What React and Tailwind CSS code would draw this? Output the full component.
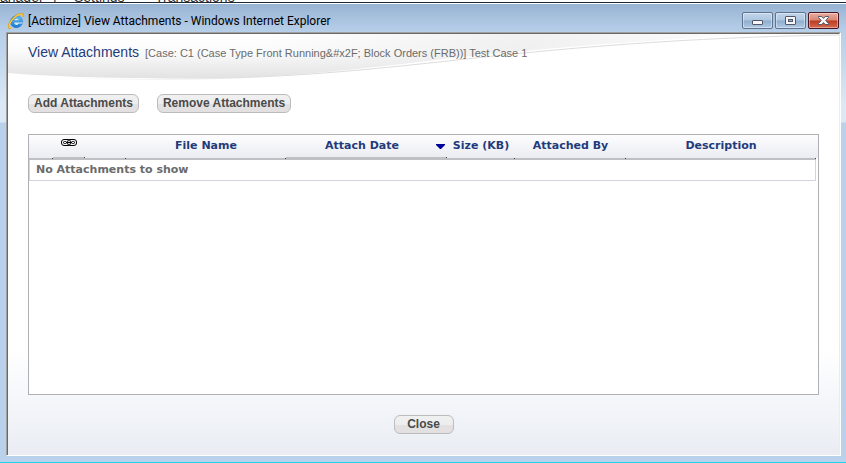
import React from "react";

const COLUMNS = [
  { key: "select", label: "", width: "w-[24px]" },
  { key: "link", label: "link", width: "w-[32px]", raised: true },
  { key: "type", label: "", width: "w-[41px]" },
  { key: "name", label: "File Name", width: "w-[160px]" },
  { key: "date", label: "Attach Date", width: "w-[161px]", raised: true },
  { key: "size", label: "Size (KB)", width: "w-[68px]" },
  { key: "by", label: "Attached By", width: "w-[111px]" },
  { key: "description", label: "Description", width: "" },
];

function BrowserIcon() {
  return (
    <svg className="size-4 shrink-0" viewBox="0 0 16 16" aria-hidden="true">
      <defs>
        <linearGradient id="ie" x1="0" y1="0" x2="0" y2="1">
          <stop offset="0" stopColor="#5cc3f7" />
          <stop offset="1" stopColor="#1a78d0" />
        </linearGradient>
      </defs>
      <path
        d="M14.300 10.600C13.400 13.200 11.200 14.700 8.500 14.700 5 14.700 2.400 12.100 2.400 8.700S5 2.800 8.500 2.800c3.900 0 6.200 2.700 6.100 6.800H6.200c.2 1.500 1.200 2.400 2.500 2.400.9 0 1.600-.5 2-1.400zM6.200 7.300h4.600c-.2-1.200-1.100-1.900-2.300-1.900S6.500 6.100 6.200 7.300z"
        fill="url(#ie)"
        stroke="#1468b4"
        strokeWidth=".4"
      />
      <path d="M6.200 7.300c.3-1.200 1.100-1.900 2.300-1.900s2.100.7 2.300 1.900zM6.200 9.600h8.200l-.2 1h-3.500c-.4.900-1.100 1.400-2 1.400-1.300 0-2.300-.9-2.500-2.400z" fill="#d6ebfa" />
      <path
        d="M3.200 15.200C.8 15.500.2 13.500 1.400 10.800 3 7 7.500 2.600 11.600 1.200c2.700-.9 4 .2 3.500 2.500"
        fill="none"
        stroke="#d79a1c"
        strokeWidth="1.900"
      />
      <path
        d="M3.200 15.100C1 15.300.5 13.500 1.600 10.900 3.200 7.200 7.600 2.800 11.600 1.400c2.500-.8 3.700.1 3.300 2.100"
        fill="none"
        stroke="#ffd955"
        strokeWidth="1"
      />
    </svg>
  );
}

function MinimizeIcon() {
  return (
    <svg width="12" height="12" viewBox="0 0 12 12" aria-hidden="true">
      <rect x=".5" y="5.500" width="10" height="4" rx=".5" fill="#f4f6f8" stroke="#535666" />
    </svg>
  );
}

function MaximizeIcon() {
  return (
    <svg width="12" height="12" viewBox="0 0 12 12" aria-hidden="true">
      <rect x=".5" y="1.500" width="10" height="8" rx=".5" fill="#f4f6f8" stroke="#535666" />
      <rect x="3.500" y="4.500" width="4" height="2" fill="#8fb4d8" stroke="#535666" />
    </svg>
  );
}

function CloseIcon() {
  return (
    <svg width="12" height="12" viewBox="0 0 12 12" aria-hidden="true">
      <path
        d="M.5 1.500h3.300L5.500 3.400 7.200 1.500h3.300v1L7.700 5.500l2.800 3v1H7.200L5.500 7.600 3.800 9.500H.5v-1l2.800-3-2.800-3z"
        fill="#f7f7f8"
        stroke="#535666"
      />
    </svg>
  );
}

function CaptionButton({ label, danger, children }) {
  const tone = danger
    ? "border-[#4a1420] bg-[linear-gradient(#e9aca0_0%,#d98674_48%,#bb3a1f_52%,#d36a51_100%)]"
    : "border-[#5f7391] bg-[linear-gradient(#c2d5ea_0%,#adc6e0_48%,#8eadcd_52%,#b0cae5_100%)]";
  return (
    <button
      type="button"
      aria-label={label}
      className={`flex h-[17px] w-[31px] items-center justify-center rounded-[2px] border shadow-[inset_0_0_0_1px_rgba(255,255,255,0.4)] ${tone}`}
    >
      {children}
    </button>
  );
}

function PillButton({ children, className = "" }) {
  return (
    <button
      type="button"
      className={`h-[19px] rounded-[6px] border border-[#bcbcbc] bg-[linear-gradient(#f0f0f0_0%,#ededed_50%,#e2e0e0_56%,#e2e0e0_100%)] px-[5px] text-[12px] leading-[17px] font-bold whitespace-nowrap text-[#4a4a4a] ${className}`}
    >
      {children}
    </button>
  );
}

function LinkIcon() {
  return (
    <svg width="16" height="7" viewBox="0 0 16 7" role="img" aria-label="Attachment">
      <g fill="none" stroke="#000">
        <rect x=".5" y=".5" width="9" height="6" rx="2.500" strokeWidth="1" />
        <rect x="6.500" y=".5" width="9" height="6" rx="2.500" strokeWidth="1" />
        <rect x="2.500" y="2.500" width="3" height="2" rx="1" strokeWidth="1" />
        <rect x="10.500" y="2.500" width="3" height="2" rx="1" strokeWidth="1" />
        <path d="M5 3.500h6" strokeWidth="1" />
      </g>
    </svg>
  );
}

function Swoosh() {
  return (
    <svg
      className="absolute inset-x-0 top-0 h-[50px] w-full"
      viewBox="0 0 831 50"
      preserveAspectRatio="none"
      aria-hidden="true"
    >
      <defs>
        <linearGradient id="swoosh" x1="0" y1="0" x2="0" y2="1">
          <stop offset="0" stopColor="#ffffff" />
          <stop offset=".4" stopColor="#fbfbfb" />
          <stop offset="1" stopColor="#e2e2e2" />
        </linearGradient>
        <linearGradient id="sheen" x1="0" y1="0" x2="1" y2="0">
          <stop offset="0" stopColor="#e8e8e8" stopOpacity="0" />
          <stop offset=".5" stopColor="#e8e8e8" stopOpacity=".6" />
          <stop offset="1" stopColor="#e8e8e8" stopOpacity="0" />
        </linearGradient>
        <linearGradient id="line" x1="0" y1="0" x2="1" y2="0">
          <stop offset="0" stopColor="#dcdcdc" stopOpacity="0" />
          <stop offset=".3" stopColor="#dcdcdc" />
          <stop offset="1" stopColor="#dcdcdc" />
        </linearGradient>
      </defs>
      <path d="M0 0H780C660 4 550 13 440 24.500 330 38 260 44.500 190 44.500 110 44.500 50 43 0 39z" fill="url(#swoosh)" />
      <path d="M250 0H780C660 4 550 13 440 24.500 370 33 310 38 250 42z" fill="url(#sheen)" />
      <path d="M60 44C230 49 330 39 440 27 550 14.500 680 3 831 1" fill="none" stroke="url(#line)" />
    </svg>
  );
}

function AttachmentsTable() {
  return (
    <div className="min-h-[200px] flex-1 border border-[#b0b0b4] bg-white">
      <div className="bg-[linear-gradient(#fdfdfe,#ebecf2)] bg-[length:100%_23px] bg-no-repeat pr-[2px]">
        <table className="w-full table-fixed border-separate border-spacing-0 font-['DejaVu_Sans',sans-serif] text-[11px] font-bold">
          <thead>
            <tr>
              {COLUMNS.map((column) => (
                <th
                  key={column.key}
                  scope="col"
                  className={`relative h-[25px] border-[#c0c0c4] p-0 align-top leading-[22px] whitespace-nowrap text-[#1f3b7b] after:absolute after:right-0 after:-bottom-px after:size-px after:bg-[#444] ${column.raised ? "border-b-3" : "border-b-2"} ${column.width}`}
                >
                  {column.key === "link" ? (
                    <span className="flex h-[15px] items-center justify-center">
                      <LinkIcon />
                    </span>
                  ) : column.key === "date" ? (
                    <span className="flex items-center justify-end gap-[37px] pr-[2px]">
                      {column.label}
                      <svg width="9" height="5" viewBox="0 0 9 5" role="img" aria-label="Sorted descending">
                        <path d="M0 0h9v1L5 5H4L0 1z" fill="#00009c" />
                      </svg>
                    </span>
                  ) : (
                    column.label
                  )}
                </th>
              ))}
            </tr>
          </thead>
          <tbody>
            <tr>
              <td
                colSpan={COLUMNS.length}
                className="h-[21px] border-x border-b border-[#d2d3dc] bg-white px-[6px] py-0 text-[#6b6b6b]"
              >
                No Attachments to show
              </td>
            </tr>
          </tbody>
        </table>
      </div>
    </div>
  );
}

export default function App() {
  return (
    <div className="flex min-h-screen flex-col bg-white font-['Liberation_Sans',Arial,sans-serif]">
      <nav
        aria-label="Application"
        className="flex h-[3px] items-end overflow-hidden border-b border-[#1c2733] text-[14px] leading-[10px] text-[#333]"
      >
        <span className="w-[53px]">anager</span>
        <span className="w-[21px]">|</span>
        <span className="w-[81px]">Settings</span>
        <span>Transactions</span>
      </nav>
      <div className="flex flex-1 flex-col border-t border-b border-t-white border-b-[#1fd3ee] bg-[linear-gradient(#98b4d3_0px,#b7cfe9_28px,#bdd4ec_45px,#dbe8f5_100px,#dbe8f5_118px,#b9d1ea_119px,#b9d1ea_100%)]">
        <header className="flex h-7 items-center justify-between pr-[7px] pl-[8px]">
          <div className="flex items-center gap-1 pt-[5px]">
            <BrowserIcon />
            <h1 className="font-[Roboto,sans-serif] text-[12px] leading-4 whitespace-nowrap text-black">
              [Actimize] View Attachments - Windows Internet Explorer
            </h1>
          </div>
          <div className="flex gap-[2px] pt-[5px]">
            <CaptionButton label="Minimize">
              <MinimizeIcon />
            </CaptionButton>
            <CaptionButton label="Maximize">
              <MaximizeIcon />
            </CaptionButton>
            <CaptionButton label="Close window" danger>
              <CloseIcon />
            </CaptionButton>
          </div>
        </header>
        <div className="mr-[5px] mb-[6px] ml-[6px] flex flex-1 flex-col border border-t-[#a0a0a0] border-r-white border-b-white border-l-[#a0a0a0]">
          <main className="relative isolate flex flex-1 flex-col border border-b-0 border-t-[#696969] border-r-[#ececec] border-l-[#696969] bg-[linear-gradient(#fff_0%,#fff_75%,#f6f8fb_85%,#e9edf3_100%)] px-[20px]">
            <div className="absolute inset-x-0 top-0 -z-10">
              <Swoosh />
            </div>
            <div className="flex items-baseline gap-[6px] pt-[8px] whitespace-nowrap">
              <h2 className="text-[14px] leading-5 text-[#1f3b7b]">View Attachments</h2>
              <p className="text-[11px] leading-5 text-[#6b6b6b]">
                {"[Case: C1 (Case Type Front Running&#x2F; Block Orders (FRB))] Test Case 1"}
              </p>
            </div>
            <div className="flex gap-[18px] pt-[31px] pb-[21px]">
              <PillButton>Add Attachments</PillButton>
              <PillButton>Remove Attachments</PillButton>
            </div>
            <AttachmentsTable />
            <footer className="flex justify-center pt-[20px] pb-[21px]">
              <PillButton className="w-[60px]">Close</PillButton>
            </footer>
          </main>
        </div>
      </div>
    </div>
  );
}
